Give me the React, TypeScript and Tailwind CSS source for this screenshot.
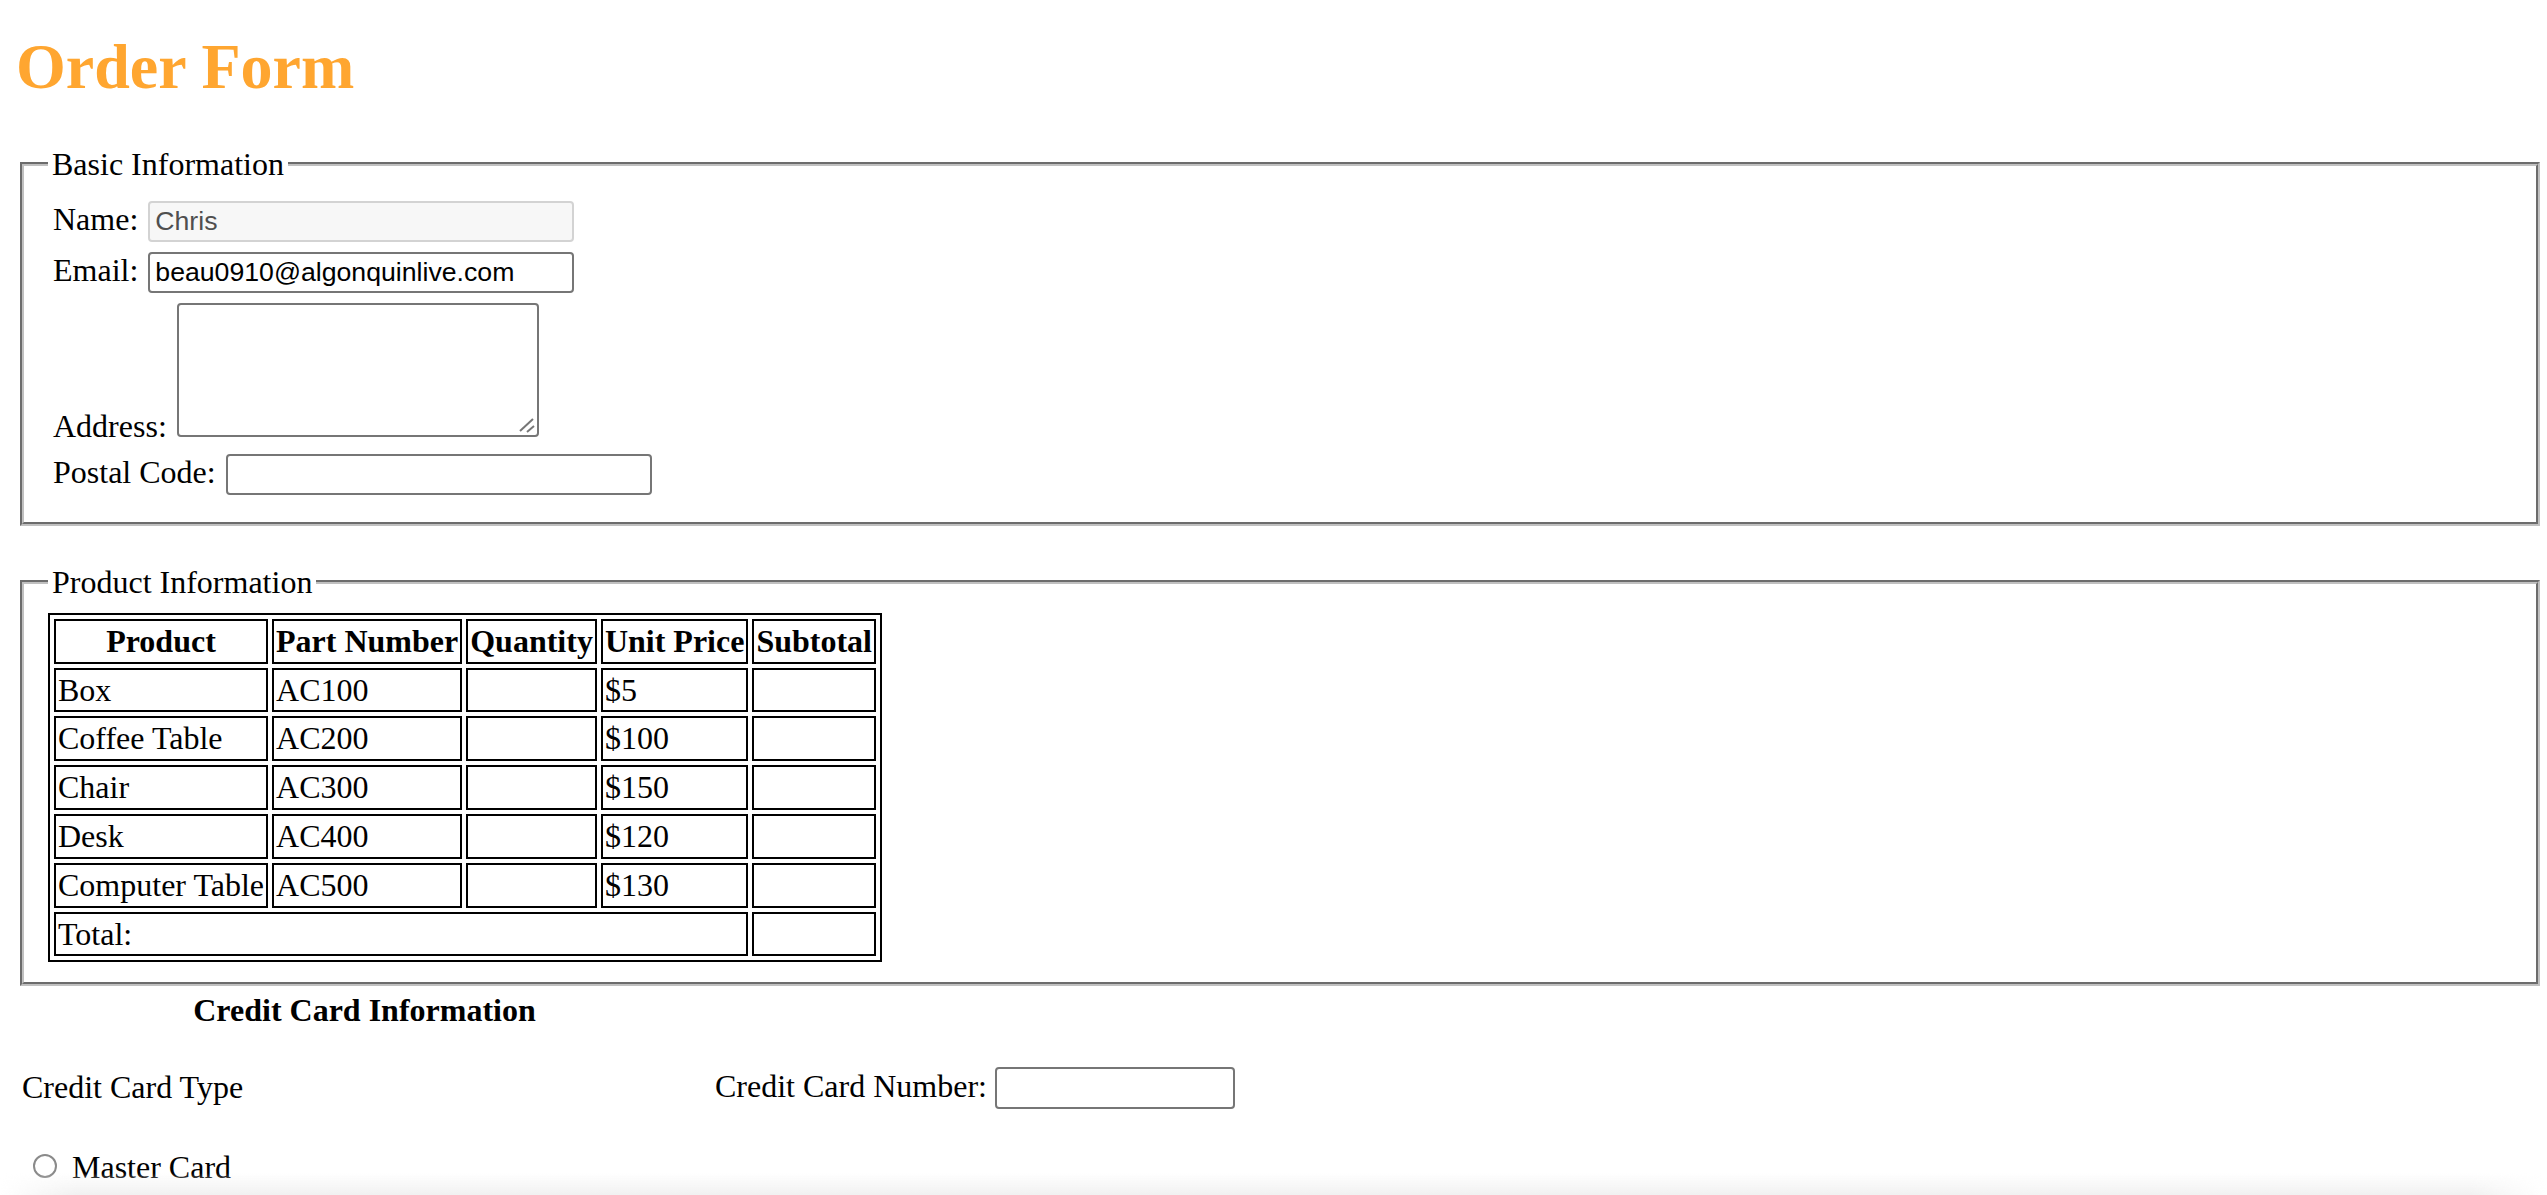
import React from "react";

const field =
  "align-baseline rounded-[4px] border-2 px-[5px] py-0 font-['Liberation_Sans',Arial,sans-serif] text-[26.67px] leading-[normal] outline-none";

const products = [
  { name: "Box", part: "AC100", price: "$5" },
  { name: "Coffee Table", part: "AC200", price: "$100" },
  { name: "Chair", part: "AC300", price: "$150" },
  { name: "Desk", part: "AC400", price: "$120" },
  { name: "Computer Table", part: "AC500", price: "$130" },
];

const th = "border-2 border-black p-[2px] text-center font-bold whitespace-nowrap";
const td = "border-2 border-black p-[2px] text-left whitespace-nowrap";

export default function App() {
  return (
    <div className="relative min-h-screen bg-white pl-[16px] pr-[3px] pt-[30px] font-['Liberation_Serif','Times_New_Roman',serif] text-[32px] leading-[36.8px] text-black">
      <h1 className="mb-[42px] text-[64px] font-bold leading-[73.5px] text-[#ffa630]">
        Order Form
      </h1>

      <fieldset className="mx-[4px] border-[4px] border-[#c0c0c0] px-[24px] pt-[14px] pb-[22px] [border-style:groove]">
        <legend className="px-[4px]">Basic Information</legend>

        <div className="pl-[5px]">
          Name:{" "}
          <input
            type="text"
            disabled
            defaultValue="Chris"
            className={`${field} my-[5px] ml-[2px] h-[41px] w-[426px] border-[#d3d3d3] bg-[#f7f7f7] text-[#4f4f4f]`}
          />
        </div>
        <div className="pl-[5px]">
          Email:{" "}
          <input
            type="text"
            defaultValue="beau0910@algonquinlive.com"
            className={`${field} my-[5px] ml-[2px] h-[41px] w-[426px] border-[#767676] bg-white text-black`}
          />
        </div>
        <div className="pl-[5px]">
          Address:{" "}
          <span className="relative ml-[2px] mt-[5px] inline-block align-baseline">
            <textarea className="block h-[134px] w-[362px] resize-none rounded-[4px] border-2 border-[#767676] bg-white outline-none" />
            <svg
              className="pointer-events-none absolute right-[2px] bottom-[2px]"
              width="20"
              height="20"
              viewBox="0 0 20 20"
            >
              <line x1="3" y1="16" x2="16" y2="4" stroke="#767676" strokeWidth="2" />
              <line x1="10" y1="17" x2="17" y2="11" stroke="#767676" strokeWidth="2" />
            </svg>
          </span>
        </div>
        <div className="mt-[4px] pl-[5px]">
          Postal Code:{" "}
          <input
            type="text"
            className={`${field} my-[5px] ml-[2px] h-[41px] w-[426px] border-[#767676] bg-white text-black`}
          />
        </div>
      </fieldset>

      <fieldset className="mx-[4px] mt-[38px] border-[4px] border-[#c0c0c0] px-[24px] pt-[12px] pb-[20px] [border-style:groove]">
        <legend className="px-[4px]">Product Information</legend>
        <table className="border-separate border-spacing-[4px] border-2 border-black">
          <thead>
            <tr>
              <th className={th}>Product</th>
              <th className={th}>Part Number</th>
              <th className={th}>Quantity</th>
              <th className={th}>Unit Price</th>
              <th className={th}>Subtotal</th>
            </tr>
          </thead>
          <tbody>
            {products.map((p) => (
              <tr key={p.part}>
                <td className={td}>{p.name}</td>
                <td className={td}>{p.part}</td>
                <td className={td}></td>
                <td className={td}>{p.price}</td>
                <td className={td}></td>
              </tr>
            ))}
            <tr>
              <td className={td} colSpan={4}>
                Total:
              </td>
              <td className={td}></td>
            </tr>
          </tbody>
        </table>
      </fieldset>

      <table className="border-separate border-spacing-[4px]">
        <tbody>
          <tr>
            <th className="w-[689px] p-[2px] text-center font-bold">Credit Card Information</th>
            <td className="p-[2px]"></td>
          </tr>
          <tr>
            <td className="w-[689px] p-[2px]">
              <p className="my-[32px]">Credit Card Type</p>
            </td>
            <td className="p-[2px] whitespace-nowrap">
              Credit Card Number:{" "}
              <input
                type="text"
                className={`${field} h-[42px] w-[240px] border-[#767676] bg-white text-black`}
              />
            </td>
          </tr>
          <tr>
            <td className="w-[689px] p-[2px]">
              <label className="whitespace-nowrap">
                <input
                  type="radio"
                  name="cardType"
                  className="mt-[8px] mr-[7px] ml-[11px] inline-block h-[24px] w-[24px] appearance-none rounded-full border-2 border-[#8a8a8a] bg-white align-baseline"
                />
                {" "}Master Card
              </label>
            </td>
            <td className="p-[2px]"></td>
          </tr>
        </tbody>
      </table>

      <div className="pointer-events-none fixed inset-x-0 bottom-0 h-[22px] bg-linear-to-b from-white/0 to-[#f1f1f1] [mask-image:linear-gradient(to_right,transparent,black_3%,black_97%,transparent)]" />
    </div>
  );
}
